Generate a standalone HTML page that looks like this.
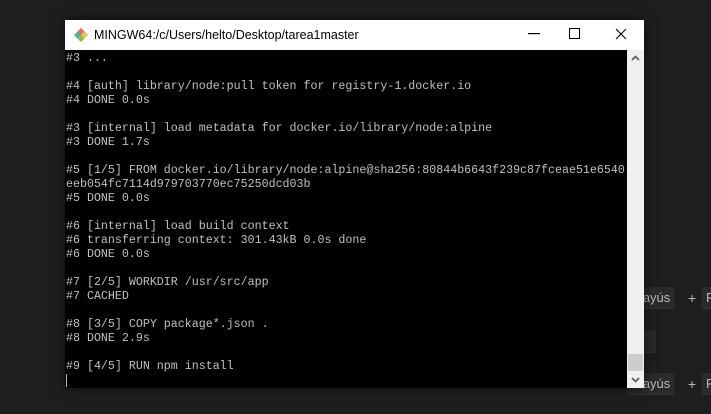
<!DOCTYPE html>
<html><head><style>
body{margin:0;width:711px;height:414px;background:#1e1e1e;position:relative;overflow:hidden;font-family:"Liberation Sans",sans-serif}
.win{position:absolute;left:65px;top:20px;width:579px;height:368px;background:#000;box-shadow:0 0 12px rgba(0,0,0,.6)}
.title{position:absolute;left:0;top:0;width:579px;height:30px;background:#fff;color:#000;font-size:12.5px}
.title .t{position:absolute;left:29px;top:8px}
.term{position:absolute;left:1px;top:32px;font-family:"Liberation Mono",monospace;font-size:11.65px;line-height:14px;color:#c0c0c0;white-space:pre}
.sb{position:absolute;left:562px;top:30px;width:17px;height:338px;background:#f0f0f0}
.key{position:absolute;background:#2a2a2a;border-radius:3px;color:#bbb;font-size:13px;padding:3px 5px;border-bottom:1px solid #333}
.plus{position:absolute;color:#bbb;font-size:14px}
</style></head><body>
<div class="key" style="left:627px;top:287px">Mayús</div><div class="plus" style="left:688px;top:290px">+</div><div class="key" style="left:701px;top:287px">F</div>
<div class="key" style="left:630px;top:330px;width:16px;height:16px"></div>
<div class="key" style="left:627px;top:373px">Mayús</div><div class="plus" style="left:688px;top:376px">+</div><div class="key" style="left:701px;top:373px">F</div>
<div class="win">
<div class="title">
<svg style="position:absolute;left:8px;top:7px" width="16" height="16" viewBox="0 0 16 16"><path d="M8 1l7 7-7 7-7-7z" fill="#4ab3a8"/><path d="M8 1l3.5 3.5L8 8 4.5 4.5z" fill="#e86f5c"/><path d="M8 8l3.5 3.5L8 15 4.5 11.5z" fill="#8cc152"/><path d="M11.5 4.5L15 8l-3.5 3.5L8 8z" fill="#f5c24c"/></svg>
<span class="t">MINGW64:/c/Users/helto/Desktop/tarea1master</span>
<svg style="position:absolute;left:463px;top:13px" width="12" height="2"><rect width="12" height="1.2" fill="#000"/></svg>
<svg style="position:absolute;left:504px;top:8px" width="12" height="12"><rect x="0.5" y="0.5" width="10" height="10" fill="none" stroke="#000"/></svg>
<svg style="position:absolute;left:550px;top:8px" width="12" height="12"><path d="M1 1L11 11M11 1L1 11" stroke="#000" stroke-width="1.1"/></svg>
</div>
<div class="term">#3 ...

#4 [auth] library/node:pull token for registry-1.docker.io
#4 DONE 0.0s

#3 [internal] load metadata for docker.io/library/node:alpine
#3 DONE 1.7s

#5 [1/5] FROM docker.io/library/node:alpine@sha256:80844b6643f239c87fceae51e6540
eeb054fc7114d979703770ec75250dcd03b
#5 DONE 0.0s

#6 [internal] load build context
#6 transferring context: 301.43kB 0.0s done
#6 DONE 0.0s

#7 [2/5] WORKDIR /usr/src/app
#7 CACHED

#8 [3/5] COPY package*.json .
#8 DONE 2.9s

#9 [4/5] RUN npm install
<span style="display:inline-block;width:1px;height:13px;background:#c0c0c0;vertical-align:top"></span></div>
<div class="sb">
<svg style="position:absolute;left:4px;top:5px" width="9" height="6"><path d="M1 5L4.5 1.5 8 5" stroke="#606060" stroke-width="1.8" fill="none"/></svg>
<div style="position:absolute;left:1px;top:304px;width:15px;height:17px;background:#cdcdcd"></div>
<svg style="position:absolute;left:4px;top:327px" width="9" height="6"><path d="M1 1L4.5 4.5 8 1" stroke="#606060" stroke-width="1.8" fill="none"/></svg>
</div>
</div>
</body></html>
